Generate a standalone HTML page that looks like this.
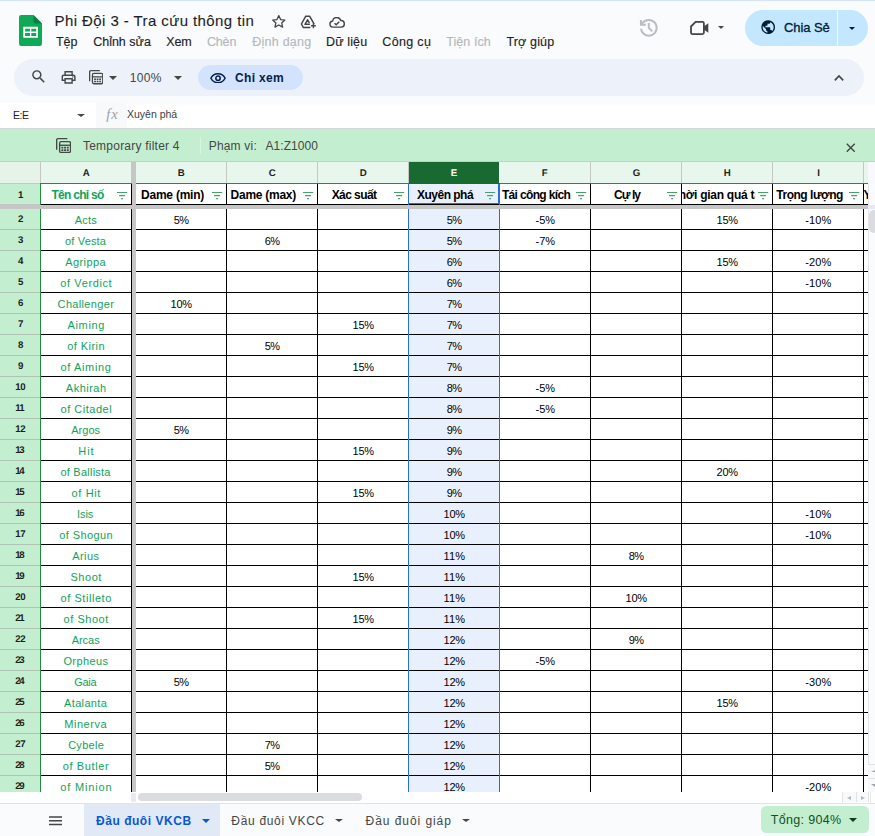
<!DOCTYPE html>
<html lang="vi"><head><meta charset="utf-8"><title>Phi Đội 3 - Tra cứu thông tin</title>
<style>
*{box-sizing:border-box;margin:0;padding:0}
html,body{width:875px;height:836px;overflow:hidden;background:#f9fbfd;font-family:"Liberation Sans",sans-serif;color:#1f1f1f}
.abs{position:absolute}
#app{position:relative;width:875px;height:836px;overflow:hidden}
</style></head><body><div id="app">

<div class="abs" style="left:0px;top:0px;width:875px;height:1px;background:#d7e3fc;"></div>
<svg class="abs" style="left:19px;top:15px" width="23" height="31" viewBox="0 0 23 31">
<path d="M2.2 0H14.5L23 8.5V28.8A2.2 2.2 0 0 1 20.8 31H2.2A2.2 2.2 0 0 1 0 28.800V2.2A2.2 2.2 0 0 1 2.2 0Z" fill="#0fa958"/>
<path d="M14.5 0L23 8.500H16.7A2.2 2.2 0 0 1 14.5 6.300Z" fill="#0b8043"/>
<path d="M4.300 11.800H18.900V22.700H4.300Z M6.100 13.700V16.500H11V13.700Z M12.300 13.700V16.500H17.200V13.700Z M6.100 18V20.900H11V18Z M12.300 18V20.900H17.200V18Z" fill="#fff" fill-rule="evenodd"/>
</svg>
<span style='position:absolute;left:54.60px;top:12px;font-size:15px;line-height:17px;letter-spacing:0.416px;color:#1f1f1f;white-space:nowrap;font-family:"Liberation Sans",sans-serif;-webkit-text-stroke:0.1px #1f1f1f;'>Phi Đội 3 - Tra cứu thông tin</span>
<svg class="abs" style="left:271.400px;top:14.300px" width="15.600" height="14.600" viewBox="0 0 24 22.500"><path d="M12 2.500l2.800 6.100 6.600.700-4.900 4.500 1.400 6.500L12 17l-5.900 3.300 1.400-6.500L2.600 9.300l6.600-.700z" fill="none" stroke="#444746" stroke-width="2" stroke-linejoin="round"/></svg>
<svg class="abs" style="left:299px;top:14px" width="18" height="16" viewBox="0 0 18 16"><path d="M6.800 2.200h3.800l4.300 7.400M6.800 2.200L2.400 10l2 3.600h6.400M8.600 5.800l-2.600 4.500h4.400M8.600 5.800l1.500 2.600" fill="none" stroke="#444746" stroke-width="1.500" stroke-linejoin="round" stroke-linecap="round"/><path d="M14.400 9.400v4.800M12 11.800h4.800" stroke="#444746" stroke-width="1.400" fill="none"/></svg>
<svg class="abs" style="left:329px;top:17px" width="16" height="11" viewBox="0 0 24 16.500"><path d="M6 15.200a4.600 4.600 0 0 1-.600-9.160A6.300 6.300 0 0 1 17.700 5.300 4.950 4.950 0 0 1 18.300 15.200z" fill="none" stroke="#444746" stroke-width="2.100" stroke-linejoin="round"/><path d="M8.300 9.300l2.500 2.500 4.600-4.600" fill="none" stroke="#444746" stroke-width="2.100"/></svg>
<span style='position:absolute;left:55.90px;top:35px;font-size:12.5px;line-height:14px;letter-spacing:-0.044px;color:#1f1f1f;white-space:nowrap;font-family:"Liberation Sans",sans-serif;-webkit-text-stroke:0.15px;'>Tệp</span>
<span style='position:absolute;left:93.20px;top:35px;font-size:12.5px;line-height:14px;letter-spacing:-0.006px;color:#1f1f1f;white-space:nowrap;font-family:"Liberation Sans",sans-serif;-webkit-text-stroke:0.15px;'>Chỉnh sửa</span>
<span style='position:absolute;left:166.30px;top:35px;font-size:12.5px;line-height:14px;letter-spacing:-0.145px;color:#1f1f1f;white-space:nowrap;font-family:"Liberation Sans",sans-serif;-webkit-text-stroke:0.15px;'>Xem</span>
<span style='position:absolute;left:206.90px;top:35px;font-size:12.5px;line-height:14px;letter-spacing:-0.144px;color:#b5b8bc;white-space:nowrap;font-family:"Liberation Sans",sans-serif;-webkit-text-stroke:0.15px;'>Chèn</span>
<span style='position:absolute;left:252.20px;top:35px;font-size:12.5px;line-height:14px;letter-spacing:0.258px;color:#b5b8bc;white-space:nowrap;font-family:"Liberation Sans",sans-serif;-webkit-text-stroke:0.15px;'>Định dạng</span>
<span style='position:absolute;left:326.10px;top:35px;font-size:12.5px;line-height:14px;letter-spacing:0.121px;color:#1f1f1f;white-space:nowrap;font-family:"Liberation Sans",sans-serif;-webkit-text-stroke:0.15px;'>Dữ liệu</span>
<span style='position:absolute;left:382.30px;top:35px;font-size:12.5px;line-height:14px;letter-spacing:0.332px;color:#1f1f1f;white-space:nowrap;font-family:"Liberation Sans",sans-serif;-webkit-text-stroke:0.15px;'>Công cụ</span>
<span style='position:absolute;left:446.20px;top:35px;font-size:12.5px;line-height:14px;letter-spacing:0.079px;color:#b5b8bc;white-space:nowrap;font-family:"Liberation Sans",sans-serif;-webkit-text-stroke:0.15px;'>Tiện ích</span>
<span style='position:absolute;left:506.40px;top:35px;font-size:12.5px;line-height:14px;letter-spacing:0.159px;color:#1f1f1f;white-space:nowrap;font-family:"Liberation Sans",sans-serif;-webkit-text-stroke:0.15px;'>Trợ giúp</span>
<svg class="abs" style="left:636.750px;top:15.550px" width="23.600" height="23.600" viewBox="0 0 24 24"><path d="M12 21q-3.450 0-6.012-2.287T3.050 13H5.100q.350 2.600 2.313 4.300T12 19q2.925 0 4.963-2.037T19 12q0-2.925-2.037-4.963T12 5q-1.725 0-3.225.800T6.250 8H9v2H3V4h2v2.350q1.275-1.600 3.113-2.475T12 3q1.875 0 3.513.713t2.850 1.924q1.212 1.213 1.925 2.850T21 12q0 1.875-.712 3.513t-1.925 2.850q-1.213 1.212-2.850 1.925T12 21Zm2.800-4.800L11 12.400V7h2v4.600l3.200 3.200-1.400 1.400Z" fill="#babcbf"/></svg>
<svg class="abs" style="left:689px;top:20px" width="21" height="16" viewBox="0 0 21 16"><path d="M6.600 1.900H13.400a1.500 1.500 0 0 1 1.500 1.500V12.600a1.500 1.500 0 0 1-1.500 1.500H3.500A1.500 1.500 0 0 1 2 12.600V6.500Z" fill="none" stroke="#444746" stroke-width="1.800" stroke-linejoin="round"/><path d="M15 6.200l4.300-3v9.600l-4.300-3z" fill="#444746"/></svg>
<div class="abs" style="left:717.50px;top:25.60px;width:0;height:0;border-left:3.40px solid transparent;border-right:3.40px solid transparent;border-top:3.60px solid #444746"></div>
<div class="abs" style="left:745px;top:10px;width:123px;height:36px;background:#c2e7ff;border-radius:18px;"></div>
<div class="abs" style="left:837px;top:10px;width:1px;height:36px;background:#f1f9ff;"></div>
<svg class="abs" style="left:760.200px;top:19.400px" width="16.400" height="16.400" viewBox="0 0 24 24"><path d="M12 2C6.480 2 2 6.480 2 12s4.480 10 10 10 10-4.480 10-10S17.520 2 12 2zm-1 17.930c-3.950-.490-7-3.850-7-7.930 0-.620.080-1.210.210-1.790L9 15v1c0 1.100.900 2 2 2v1.930zm6.900-2.540c-.260-.810-1-1.390-1.900-1.390h-1v-3c0-.550-.450-1-1-1H8v-2h2c.550 0 1-.450 1-1V7h2c1.100 0 2-.900 2-2v-.410c2.930 1.190 5 4.060 5 7.410 0 2.080-.800 3.970-2.100 5.390z" fill="#001d35"/></svg>
<span style='position:absolute;left:784.00px;top:20px;font-size:13px;line-height:15px;letter-spacing:-0.087px;color:#001d35;white-space:nowrap;font-family:"Liberation Sans",sans-serif;-webkit-text-stroke:0.3px #001d35;'>Chia Sẻ</span>
<div class="abs" style="left:849.30px;top:26.90px;width:0;height:0;border-left:3.60px solid transparent;border-right:3.60px solid transparent;border-top:3.50px solid #001d35"></div>
<div class="abs" style="left:14px;top:59px;width:850px;height:37px;background:#edf2fa;border-radius:18.500px;"></div>
<svg class="abs" style="left:30.100px;top:68.400px" width="17.300" height="17.300" viewBox="0 0 24 24"><path d="M15.500 14h-.790l-.280-.270A6.471 6.471 0 0 0 16 9.500 6.500 6.500 0 1 0 9.500 16c1.610 0 3.090-.590 4.230-1.570l.270.280v.790l5 4.990L20.490 19l-4.990-5zm-6 0C7.010 14 5 11.990 5 9.500S7.010 5 9.500 5 14 7.010 14 9.500 11.990 14 9.500 14z" fill="#444746"/></svg>
<svg class="abs" style="left:60.400px;top:69px" width="17.200" height="16.800" viewBox="0 0 24 24"><path d="M19 8h-1V3H6v5H5c-1.660 0-3 1.340-3 3v6h4v4h12v-4h4v-6c0-1.660-1.340-3-3-3zM8 5h8v3H8V5zm8 14H8v-4h8v4zm4-4h-2v-2H6v2H4v-4c0-.550.450-1 1-1h14c.550 0 1 .450 1 1v4z" fill="#444746"/><circle cx="18" cy="11.500" r="1" fill="#444746"/></svg>
<svg class="abs" style="left:88.9px;top:70.2px" width="14.4" height="14.4" viewBox="0 0 18 18"><path d="M0.800 14V2.300A1.500 1.500 0 0 1 2.300 .800H13.500" fill="none" stroke="#444746" stroke-width="1.600"/><rect x="4.300" y="4.300" width="12.900" height="12.900" rx="1.800" fill="none" stroke="#444746" stroke-width="1.600"/><path d="M4.300 8.600h12.900" stroke="#444746" stroke-width="1.600"/><path d="M6.400 10.500h2.300v2H6.400zM9.600 10.500h2.300v2H9.600zM12.800 10.500h2.300v2h-2.300zM6.400 13.400h2.300v2H6.400zM9.600 13.400h2.300v2H9.600zM12.800 13.400h2.300v2h-2.300z" fill="#444746"/></svg>
<div class="abs" style="left:108.60px;top:76.00px;width:0;height:0;border-left:4.30px solid transparent;border-right:4.30px solid transparent;border-top:4.20px solid #444746"></div>
<span style='position:absolute;left:129.80px;top:71px;font-size:12px;line-height:14px;letter-spacing:0.293px;color:#444746;white-space:nowrap;font-family:"Liberation Sans",sans-serif;'>100%</span>
<div class="abs" style="left:173.60px;top:76.40px;width:0;height:0;border-left:4.30px solid transparent;border-right:4.30px solid transparent;border-top:4.00px solid #444746"></div>
<div class="abs" style="left:198px;top:65px;width:105px;height:25px;background:#d3e3fd;border-radius:12.500px;"></div>
<svg class="abs" style="left:210px;top:72.500px" width="16" height="10.500" viewBox="0 0 22 14.500"><path d="M1.200 7.250C3.100 3.300 6.700 1.100 11 1.100s7.900 2.200 9.800 6.150C18.900 11.200 15.300 13.400 11 13.400S3.100 11.200 1.200 7.250z" fill="none" stroke="#041e49" stroke-width="2.100"/><circle cx="11" cy="7.250" r="3" fill="none" stroke="#041e49" stroke-width="2.100"/></svg>
<span style='position:absolute;left:235.10px;top:71px;font-size:12px;line-height:14px;letter-spacing:0.298px;color:#041e49;white-space:nowrap;font-family:"Liberation Sans",sans-serif;font-weight:bold;'>Chỉ xem</span>
<svg class="abs" style="left:834px;top:74px" width="10" height="7.500" viewBox="0 0 10 7.500"><path d="M.800 6.300L5 2l4.200 4.300" fill="none" stroke="#444746" stroke-width="1.700"/></svg>
<div class="abs" style="left:0px;top:103px;width:875px;height:25px;background:#fff;"></div>
<div class="abs" style="left:96px;top:103px;width:31px;height:25px;background:#f8f9fa;"></div>
<div class="abs" style="left:127px;top:103px;width:748px;height:1px;background:#fafbfd;"></div>
<div class="abs" style="left:127px;top:104px;width:748px;height:1px;background:#fdfdfe;"></div>
<div class="abs" style="left:0px;top:128px;width:875px;height:1px;background:#d5d8db;"></div>
<span style='position:absolute;left:13.10px;top:109px;font-size:10.5px;line-height:12px;letter-spacing:-0.560px;color:#1f1f1f;white-space:nowrap;font-family:"Liberation Sans",sans-serif;'>E:E</span>
<div class="abs" style="left:76.70px;top:114.30px;width:0;height:0;border-left:4.10px solid transparent;border-right:4.10px solid transparent;border-top:3.60px solid #444746"></div>
<span style='position:absolute;left:106.30px;top:106px;font-size:14.5px;line-height:16px;letter-spacing:0.971px;color:#9ea1a5;white-space:nowrap;font-family:"Liberation Serif",serif;font-style:italic;'>fx</span>
<span style='position:absolute;left:127.00px;top:108px;font-size:10.5px;line-height:12px;letter-spacing:-0.009px;color:#3c4043;white-space:nowrap;font-family:"Liberation Sans",sans-serif;'>Xuyên phá</span>
<div class="abs" style="left:0px;top:129px;width:875px;height:32px;background:#c4eed0;"></div>
<div class="abs" style="left:0px;top:161px;width:875px;height:1px;background:#c9cdc9;"></div>
<svg class="abs" style="left:56px;top:138px" width="15.2" height="15.2" viewBox="0 0 18 18"><path d="M0.800 14V2.300A1.500 1.500 0 0 1 2.300 .800H13.500" fill="none" stroke="#444746" stroke-width="1.600"/><rect x="4.300" y="4.300" width="12.900" height="12.900" rx="1.800" fill="none" stroke="#444746" stroke-width="1.600"/><path d="M4.300 8.600h12.900" stroke="#444746" stroke-width="1.600"/><path d="M6.400 10.500h2.300v2H6.400zM9.600 10.500h2.300v2H9.600zM12.800 10.500h2.300v2h-2.300zM6.400 13.400h2.300v2H6.400zM9.600 13.400h2.300v2H9.600zM12.800 13.400h2.300v2h-2.300z" fill="#444746"/></svg>
<span style='position:absolute;left:83.00px;top:139px;font-size:12px;line-height:14px;letter-spacing:0.222px;color:#444746;white-space:nowrap;font-family:"Liberation Sans",sans-serif;'>Temporary filter 4</span>
<div class="abs" style="left:200px;top:137px;width:1px;height:17px;background:#d9f4e1;"></div>
<span style='position:absolute;left:208.70px;top:139px;font-size:12px;line-height:14px;letter-spacing:0.193px;color:#444746;white-space:nowrap;font-family:"Liberation Sans",sans-serif;'>Phạm vi:</span>
<span style='position:absolute;left:265.50px;top:139px;font-size:12px;line-height:14px;letter-spacing:0.062px;color:#444746;white-space:nowrap;font-family:"Liberation Sans",sans-serif;'>A1:Z1000</span>
<svg class="abs" style="left:846px;top:142.500px" width="9.500" height="9.500" viewBox="0 0 10 10"><path d="M.800 .800l8.400 8.400M9.200 .800L.800 9.200" stroke="#444746" stroke-width="1.500" fill="none"/></svg>
<div class="abs" style="left:0px;top:162px;width:868px;height:630px;background:#fff;"></div>
<div class="abs" style="left:0px;top:162px;width:40px;height:21px;background:#e6f3e9;"></div>
<div class="abs" style="left:40px;top:162px;width:1px;height:21px;background:#c4c8c5;"></div>
<div class="abs" style="left:41px;top:162px;width:90px;height:21px;background:#e8f7ed;"></div>
<div class="abs" style="left:131px;top:162px;width:1px;height:21px;background:#c4c8c5;"></div>
<span style='position:absolute;left:82.80px;top:168px;font-size:9.7px;line-height:11px;letter-spacing:0.000px;color:#1f1f1f;white-space:nowrap;font-family:"Liberation Sans",sans-serif;font-weight:bold;text-rendering:geometricPrecision;'>A</span>
<div class="abs" style="left:136px;top:162px;width:90px;height:21px;background:#e8f7ed;"></div>
<div class="abs" style="left:226px;top:162px;width:1px;height:21px;background:#c4c8c5;"></div>
<span style='position:absolute;left:177.80px;top:168px;font-size:9.7px;line-height:11px;letter-spacing:0.000px;color:#1f1f1f;white-space:nowrap;font-family:"Liberation Sans",sans-serif;font-weight:bold;text-rendering:geometricPrecision;'>B</span>
<div class="abs" style="left:227px;top:162px;width:90px;height:21px;background:#e8f7ed;"></div>
<div class="abs" style="left:317px;top:162px;width:1px;height:21px;background:#c4c8c5;"></div>
<span style='position:absolute;left:268.80px;top:168px;font-size:9.7px;line-height:11px;letter-spacing:0.000px;color:#1f1f1f;white-space:nowrap;font-family:"Liberation Sans",sans-serif;font-weight:bold;text-rendering:geometricPrecision;'>C</span>
<div class="abs" style="left:318px;top:162px;width:90px;height:21px;background:#e8f7ed;"></div>
<div class="abs" style="left:408px;top:162px;width:1px;height:21px;background:#c4c8c5;"></div>
<span style='position:absolute;left:359.80px;top:168px;font-size:9.7px;line-height:11px;letter-spacing:0.000px;color:#1f1f1f;white-space:nowrap;font-family:"Liberation Sans",sans-serif;font-weight:bold;text-rendering:geometricPrecision;'>D</span>
<div class="abs" style="left:409px;top:162px;width:90px;height:22px;background:#186a31;"></div>
<span style='position:absolute;left:450.80px;top:168px;font-size:9.7px;line-height:11px;letter-spacing:0.000px;color:#fff;white-space:nowrap;font-family:"Liberation Sans",sans-serif;font-weight:bold;text-rendering:geometricPrecision;'>E</span>
<div class="abs" style="left:500px;top:162px;width:90px;height:21px;background:#e8f7ed;"></div>
<div class="abs" style="left:590px;top:162px;width:1px;height:21px;background:#c4c8c5;"></div>
<span style='position:absolute;left:541.80px;top:168px;font-size:9.7px;line-height:11px;letter-spacing:0.000px;color:#1f1f1f;white-space:nowrap;font-family:"Liberation Sans",sans-serif;font-weight:bold;text-rendering:geometricPrecision;'>F</span>
<div class="abs" style="left:591px;top:162px;width:90px;height:21px;background:#e8f7ed;"></div>
<div class="abs" style="left:681px;top:162px;width:1px;height:21px;background:#c4c8c5;"></div>
<span style='position:absolute;left:632.80px;top:168px;font-size:9.7px;line-height:11px;letter-spacing:0.000px;color:#1f1f1f;white-space:nowrap;font-family:"Liberation Sans",sans-serif;font-weight:bold;text-rendering:geometricPrecision;'>G</span>
<div class="abs" style="left:682px;top:162px;width:90px;height:21px;background:#e8f7ed;"></div>
<div class="abs" style="left:772px;top:162px;width:1px;height:21px;background:#c4c8c5;"></div>
<span style='position:absolute;left:723.80px;top:168px;font-size:9.7px;line-height:11px;letter-spacing:0.000px;color:#1f1f1f;white-space:nowrap;font-family:"Liberation Sans",sans-serif;font-weight:bold;text-rendering:geometricPrecision;'>H</span>
<div class="abs" style="left:773px;top:162px;width:90px;height:21px;background:#e8f7ed;"></div>
<div class="abs" style="left:863px;top:162px;width:1px;height:21px;background:#c4c8c5;"></div>
<span style='position:absolute;left:817.30px;top:168px;font-size:9.7px;line-height:11px;letter-spacing:0.000px;color:#1f1f1f;white-space:nowrap;font-family:"Liberation Sans",sans-serif;font-weight:bold;text-rendering:geometricPrecision;'>I</span>
<div class="abs" style="left:864px;top:162px;width:4px;height:21px;background:#e8f7ed;"></div>
<div class="abs" style="left:0px;top:183px;width:40px;height:609px;background:#c4eed0;"></div>
<div class="abs" style="left:0px;top:183px;width:40px;height:1px;background:#c3c8c4;"></div>
<span style='position:absolute;left:17.95px;top:190px;font-size:9.7px;line-height:11px;letter-spacing:0.000px;color:#1f1f1f;white-space:nowrap;font-family:"Liberation Sans",sans-serif;font-weight:bold;text-rendering:geometricPrecision;'>1</span>
<div class="abs" style="left:0px;top:229px;width:40px;height:1px;background:#b0c4b6;"></div>
<span style='position:absolute;left:17.95px;top:214px;font-size:9.7px;line-height:11px;letter-spacing:0.000px;color:#1f1f1f;white-space:nowrap;font-family:"Liberation Sans",sans-serif;font-weight:bold;text-rendering:geometricPrecision;'>2</span>
<div class="abs" style="left:0px;top:250px;width:40px;height:1px;background:#b0c4b6;"></div>
<span style='position:absolute;left:17.95px;top:235px;font-size:9.7px;line-height:11px;letter-spacing:0.000px;color:#1f1f1f;white-space:nowrap;font-family:"Liberation Sans",sans-serif;font-weight:bold;text-rendering:geometricPrecision;'>3</span>
<div class="abs" style="left:0px;top:271px;width:40px;height:1px;background:#b0c4b6;"></div>
<span style='position:absolute;left:17.95px;top:256px;font-size:9.7px;line-height:11px;letter-spacing:0.000px;color:#1f1f1f;white-space:nowrap;font-family:"Liberation Sans",sans-serif;font-weight:bold;text-rendering:geometricPrecision;'>4</span>
<div class="abs" style="left:0px;top:292px;width:40px;height:1px;background:#b0c4b6;"></div>
<span style='position:absolute;left:17.95px;top:277px;font-size:9.7px;line-height:11px;letter-spacing:0.000px;color:#1f1f1f;white-space:nowrap;font-family:"Liberation Sans",sans-serif;font-weight:bold;text-rendering:geometricPrecision;'>5</span>
<div class="abs" style="left:0px;top:313px;width:40px;height:1px;background:#b0c4b6;"></div>
<span style='position:absolute;left:17.95px;top:298px;font-size:9.7px;line-height:11px;letter-spacing:0.000px;color:#1f1f1f;white-space:nowrap;font-family:"Liberation Sans",sans-serif;font-weight:bold;text-rendering:geometricPrecision;'>6</span>
<div class="abs" style="left:0px;top:334px;width:40px;height:1px;background:#b0c4b6;"></div>
<span style='position:absolute;left:17.95px;top:319px;font-size:9.7px;line-height:11px;letter-spacing:0.000px;color:#1f1f1f;white-space:nowrap;font-family:"Liberation Sans",sans-serif;font-weight:bold;text-rendering:geometricPrecision;'>7</span>
<div class="abs" style="left:0px;top:355px;width:40px;height:1px;background:#b0c4b6;"></div>
<span style='position:absolute;left:17.95px;top:340px;font-size:9.7px;line-height:11px;letter-spacing:0.000px;color:#1f1f1f;white-space:nowrap;font-family:"Liberation Sans",sans-serif;font-weight:bold;text-rendering:geometricPrecision;'>8</span>
<div class="abs" style="left:0px;top:376px;width:40px;height:1px;background:#b0c4b6;"></div>
<span style='position:absolute;left:17.95px;top:361px;font-size:9.7px;line-height:11px;letter-spacing:0.000px;color:#1f1f1f;white-space:nowrap;font-family:"Liberation Sans",sans-serif;font-weight:bold;text-rendering:geometricPrecision;'>9</span>
<div class="abs" style="left:0px;top:397px;width:40px;height:1px;background:#b0c4b6;"></div>
<span style='position:absolute;left:15.30px;top:382px;font-size:9.7px;line-height:11px;letter-spacing:-0.388px;color:#1f1f1f;white-space:nowrap;font-family:"Liberation Sans",sans-serif;font-weight:bold;text-rendering:geometricPrecision;'>10</span>
<div class="abs" style="left:0px;top:418px;width:40px;height:1px;background:#b0c4b6;"></div>
<span style='position:absolute;left:15.30px;top:403px;font-size:9.7px;line-height:11px;letter-spacing:-0.853px;color:#1f1f1f;white-space:nowrap;font-family:"Liberation Sans",sans-serif;font-weight:bold;text-rendering:geometricPrecision;'>11</span>
<div class="abs" style="left:0px;top:439px;width:40px;height:1px;background:#b0c4b6;"></div>
<span style='position:absolute;left:15.30px;top:424px;font-size:9.7px;line-height:11px;letter-spacing:-0.388px;color:#1f1f1f;white-space:nowrap;font-family:"Liberation Sans",sans-serif;font-weight:bold;text-rendering:geometricPrecision;'>12</span>
<div class="abs" style="left:0px;top:460px;width:40px;height:1px;background:#b0c4b6;"></div>
<span style='position:absolute;left:15.30px;top:445px;font-size:9.7px;line-height:11px;letter-spacing:-1.388px;color:#1f1f1f;white-space:nowrap;font-family:"Liberation Sans",sans-serif;font-weight:bold;text-rendering:geometricPrecision;'>13</span>
<div class="abs" style="left:0px;top:481px;width:40px;height:1px;background:#b0c4b6;"></div>
<span style='position:absolute;left:15.30px;top:466px;font-size:9.7px;line-height:11px;letter-spacing:-1.388px;color:#1f1f1f;white-space:nowrap;font-family:"Liberation Sans",sans-serif;font-weight:bold;text-rendering:geometricPrecision;'>14</span>
<div class="abs" style="left:0px;top:502px;width:40px;height:1px;background:#b0c4b6;"></div>
<span style='position:absolute;left:15.30px;top:487px;font-size:9.7px;line-height:11px;letter-spacing:-1.388px;color:#1f1f1f;white-space:nowrap;font-family:"Liberation Sans",sans-serif;font-weight:bold;text-rendering:geometricPrecision;'>15</span>
<div class="abs" style="left:0px;top:523px;width:40px;height:1px;background:#b0c4b6;"></div>
<span style='position:absolute;left:15.30px;top:508px;font-size:9.7px;line-height:11px;letter-spacing:-1.388px;color:#1f1f1f;white-space:nowrap;font-family:"Liberation Sans",sans-serif;font-weight:bold;text-rendering:geometricPrecision;'>16</span>
<div class="abs" style="left:0px;top:544px;width:40px;height:1px;background:#b0c4b6;"></div>
<span style='position:absolute;left:15.30px;top:529px;font-size:9.7px;line-height:11px;letter-spacing:-0.388px;color:#1f1f1f;white-space:nowrap;font-family:"Liberation Sans",sans-serif;font-weight:bold;text-rendering:geometricPrecision;'>17</span>
<div class="abs" style="left:0px;top:565px;width:40px;height:1px;background:#b0c4b6;"></div>
<span style='position:absolute;left:15.30px;top:550px;font-size:9.7px;line-height:11px;letter-spacing:-1.388px;color:#1f1f1f;white-space:nowrap;font-family:"Liberation Sans",sans-serif;font-weight:bold;text-rendering:geometricPrecision;'>18</span>
<div class="abs" style="left:0px;top:586px;width:40px;height:1px;background:#b0c4b6;"></div>
<span style='position:absolute;left:15.30px;top:571px;font-size:9.7px;line-height:11px;letter-spacing:-1.388px;color:#1f1f1f;white-space:nowrap;font-family:"Liberation Sans",sans-serif;font-weight:bold;text-rendering:geometricPrecision;'>19</span>
<div class="abs" style="left:0px;top:607px;width:40px;height:1px;background:#b0c4b6;"></div>
<span style='position:absolute;left:15.30px;top:592px;font-size:9.7px;line-height:11px;letter-spacing:-0.388px;color:#1f1f1f;white-space:nowrap;font-family:"Liberation Sans",sans-serif;font-weight:bold;text-rendering:geometricPrecision;'>20</span>
<div class="abs" style="left:0px;top:628px;width:40px;height:1px;background:#b0c4b6;"></div>
<span style='position:absolute;left:15.30px;top:613px;font-size:9.7px;line-height:11px;letter-spacing:-1.388px;color:#1f1f1f;white-space:nowrap;font-family:"Liberation Sans",sans-serif;font-weight:bold;text-rendering:geometricPrecision;'>21</span>
<div class="abs" style="left:0px;top:649px;width:40px;height:1px;background:#b0c4b6;"></div>
<span style='position:absolute;left:15.30px;top:634px;font-size:9.7px;line-height:11px;letter-spacing:-0.388px;color:#1f1f1f;white-space:nowrap;font-family:"Liberation Sans",sans-serif;font-weight:bold;text-rendering:geometricPrecision;'>22</span>
<div class="abs" style="left:0px;top:670px;width:40px;height:1px;background:#b0c4b6;"></div>
<span style='position:absolute;left:15.30px;top:655px;font-size:9.7px;line-height:11px;letter-spacing:-1.388px;color:#1f1f1f;white-space:nowrap;font-family:"Liberation Sans",sans-serif;font-weight:bold;text-rendering:geometricPrecision;'>23</span>
<div class="abs" style="left:0px;top:691px;width:40px;height:1px;background:#b0c4b6;"></div>
<span style='position:absolute;left:15.30px;top:676px;font-size:9.7px;line-height:11px;letter-spacing:-1.388px;color:#1f1f1f;white-space:nowrap;font-family:"Liberation Sans",sans-serif;font-weight:bold;text-rendering:geometricPrecision;'>24</span>
<div class="abs" style="left:0px;top:712px;width:40px;height:1px;background:#b0c4b6;"></div>
<span style='position:absolute;left:15.30px;top:697px;font-size:9.7px;line-height:11px;letter-spacing:-1.388px;color:#1f1f1f;white-space:nowrap;font-family:"Liberation Sans",sans-serif;font-weight:bold;text-rendering:geometricPrecision;'>25</span>
<div class="abs" style="left:0px;top:733px;width:40px;height:1px;background:#b0c4b6;"></div>
<span style='position:absolute;left:15.30px;top:718px;font-size:9.7px;line-height:11px;letter-spacing:-1.388px;color:#1f1f1f;white-space:nowrap;font-family:"Liberation Sans",sans-serif;font-weight:bold;text-rendering:geometricPrecision;'>26</span>
<div class="abs" style="left:0px;top:754px;width:40px;height:1px;background:#b0c4b6;"></div>
<span style='position:absolute;left:15.30px;top:739px;font-size:9.7px;line-height:11px;letter-spacing:-0.388px;color:#1f1f1f;white-space:nowrap;font-family:"Liberation Sans",sans-serif;font-weight:bold;text-rendering:geometricPrecision;'>27</span>
<div class="abs" style="left:0px;top:775px;width:40px;height:1px;background:#b0c4b6;"></div>
<span style='position:absolute;left:15.30px;top:760px;font-size:9.7px;line-height:11px;letter-spacing:-1.388px;color:#1f1f1f;white-space:nowrap;font-family:"Liberation Sans",sans-serif;font-weight:bold;text-rendering:geometricPrecision;'>28</span>
<div class="abs" style="left:0px;top:796px;width:40px;height:1px;background:#b0c4b6;"></div>
<span style='position:absolute;left:15.30px;top:781px;font-size:9.7px;line-height:11px;letter-spacing:-1.388px;color:#1f1f1f;white-space:nowrap;font-family:"Liberation Sans",sans-serif;font-weight:bold;text-rendering:geometricPrecision;'>29</span>
<div class="abs" style="left:409px;top:184px;width:90px;height:608px;background:#e8f0fd;"></div>
<span style='position:absolute;left:51.40px;top:188px;font-size:12px;line-height:14px;letter-spacing:-0.713px;color:#10a35a;white-space:nowrap;font-family:"Liberation Sans",sans-serif;font-weight:bold;'>Tên chỉ số</span>
<span style='position:absolute;left:141.00px;top:188px;font-size:12px;line-height:14px;letter-spacing:-0.228px;color:#000;white-space:nowrap;font-family:"Liberation Sans",sans-serif;font-weight:bold;'>Dame (min)</span>
<span style='position:absolute;left:230.60px;top:188px;font-size:12px;line-height:14px;letter-spacing:-0.270px;color:#000;white-space:nowrap;font-family:"Liberation Sans",sans-serif;font-weight:bold;'>Dame (max)</span>
<span style='position:absolute;left:331.70px;top:188px;font-size:12px;line-height:14px;letter-spacing:-0.580px;color:#000;white-space:nowrap;font-family:"Liberation Sans",sans-serif;font-weight:bold;'>Xác suất</span>
<span style='position:absolute;left:417.00px;top:188px;font-size:12px;line-height:14px;letter-spacing:-0.513px;color:#000;white-space:nowrap;font-family:"Liberation Sans",sans-serif;font-weight:bold;'>Xuyên phá</span>
<span style='position:absolute;left:501.90px;top:188px;font-size:12px;line-height:14px;letter-spacing:-0.646px;color:#000;white-space:nowrap;font-family:"Liberation Sans",sans-serif;font-weight:bold;'>Tái công kích</span>
<span style='position:absolute;left:614.10px;top:188px;font-size:12px;line-height:14px;letter-spacing:-0.956px;color:#000;white-space:nowrap;font-family:"Liberation Sans",sans-serif;font-weight:bold;'>Cự ly</span>
<span style='position:absolute;left:776.30px;top:188px;font-size:12px;line-height:14px;letter-spacing:-0.485px;color:#000;white-space:nowrap;font-family:"Liberation Sans",sans-serif;font-weight:bold;'>Trọng lượng</span>
<div class="abs" style="left:682px;top:184px;width:73px;height:20px;overflow:hidden">
<span style="position:absolute;left:-10.45px;top:4px;font-size:12px;line-height:14px;font-weight:bold;color:#000;white-space:nowrap;letter-spacing:-0.256px">Thời gian quá tải</span>
</div>
<div class="abs" style="left:864px;top:184px;width:4px;height:20px;overflow:hidden"><span style="position:absolute;left:-0.500px;top:4px;font-size:12px;line-height:14px;font-weight:bold;color:#000">Y</span></div>
<svg class="abs" style="left:117px;top:191px;width:11px;height:9px" viewBox="0 0 11 9"><path d="M0 1.500h10.200M2.100 4.600h6M4.100 7.600h2" stroke="#46a268" stroke-width="1.100" fill="none"/></svg>
<svg class="abs" style="left:212.3px;top:191px;width:11px;height:9px" viewBox="0 0 11 9"><path d="M0 1.500h10.200M2.100 4.600h6M4.100 7.600h2" stroke="#46a268" stroke-width="1.100" fill="none"/></svg>
<svg class="abs" style="left:302.8px;top:191px;width:11px;height:9px" viewBox="0 0 11 9"><path d="M0 1.500h10.200M2.100 4.600h6M4.100 7.600h2" stroke="#46a268" stroke-width="1.100" fill="none"/></svg>
<svg class="abs" style="left:393.9px;top:191px;width:11px;height:9px" viewBox="0 0 11 9"><path d="M0 1.500h10.200M2.100 4.600h6M4.100 7.600h2" stroke="#46a268" stroke-width="1.100" fill="none"/></svg>
<svg class="abs" style="left:484.9px;top:191px;width:11px;height:9px" viewBox="0 0 11 9"><path d="M0 1.500h10.200M2.100 4.600h6M4.100 7.600h2" stroke="#46a268" stroke-width="1.100" fill="none"/></svg>
<svg class="abs" style="left:575.8px;top:191px;width:11px;height:9px" viewBox="0 0 11 9"><path d="M0 1.500h10.200M2.100 4.600h6M4.100 7.600h2" stroke="#46a268" stroke-width="1.100" fill="none"/></svg>
<svg class="abs" style="left:666.8px;top:191px;width:11px;height:9px" viewBox="0 0 11 9"><path d="M0 1.500h10.200M2.100 4.600h6M4.100 7.600h2" stroke="#46a268" stroke-width="1.100" fill="none"/></svg>
<svg class="abs" style="left:757.8px;top:191px;width:11px;height:9px" viewBox="0 0 11 9"><path d="M0 1.500h10.200M2.100 4.600h6M4.100 7.600h2" stroke="#46a268" stroke-width="1.100" fill="none"/></svg>
<svg class="abs" style="left:848.8px;top:191px;width:11px;height:9px" viewBox="0 0 11 9"><path d="M0 1.500h10.200M2.100 4.600h6M4.100 7.600h2" stroke="#46a268" stroke-width="1.100" fill="none"/></svg>
<span style='position:absolute;left:74.65px;top:214px;font-size:11px;line-height:12px;letter-spacing:0.202px;color:#10a35a;white-space:nowrap;font-family:"Liberation Sans",sans-serif;'>Acts</span>
<span style='position:absolute;left:173.65px;top:214px;font-size:11px;line-height:12px;letter-spacing:-0.618px;color:#000;white-space:nowrap;font-family:"Liberation Sans",sans-serif;'>5%</span>
<span style='position:absolute;left:446.65px;top:214px;font-size:11px;line-height:12px;letter-spacing:-0.618px;color:#000;white-space:nowrap;font-family:"Liberation Sans",sans-serif;'>5%</span>
<span style='position:absolute;left:535.45px;top:214px;font-size:11px;line-height:12px;letter-spacing:0.060px;color:#000;white-space:nowrap;font-family:"Liberation Sans",sans-serif;'>-5%</span>
<span style='position:absolute;left:716.50px;top:214px;font-size:11px;line-height:12px;letter-spacing:-0.218px;color:#000;white-space:nowrap;font-family:"Liberation Sans",sans-serif;'>15%</span>
<span style='position:absolute;left:805.30px;top:214px;font-size:11px;line-height:12px;letter-spacing:0.101px;color:#000;white-space:nowrap;font-family:"Liberation Sans",sans-serif;'>-10%</span>
<span style='position:absolute;left:65.00px;top:235px;font-size:11px;line-height:12px;letter-spacing:0.167px;color:#10a35a;white-space:nowrap;font-family:"Liberation Sans",sans-serif;'>of Vesta</span>
<span style='position:absolute;left:264.65px;top:235px;font-size:11px;line-height:12px;letter-spacing:-0.618px;color:#000;white-space:nowrap;font-family:"Liberation Sans",sans-serif;'>6%</span>
<span style='position:absolute;left:446.65px;top:235px;font-size:11px;line-height:12px;letter-spacing:-0.618px;color:#000;white-space:nowrap;font-family:"Liberation Sans",sans-serif;'>5%</span>
<span style='position:absolute;left:535.45px;top:235px;font-size:11px;line-height:12px;letter-spacing:0.060px;color:#000;white-space:nowrap;font-family:"Liberation Sans",sans-serif;'>-7%</span>
<span style='position:absolute;left:65.35px;top:256px;font-size:11px;line-height:12px;letter-spacing:0.384px;color:#10a35a;white-space:nowrap;font-family:"Liberation Sans",sans-serif;'>Agrippa</span>
<span style='position:absolute;left:446.65px;top:256px;font-size:11px;line-height:12px;letter-spacing:-0.618px;color:#000;white-space:nowrap;font-family:"Liberation Sans",sans-serif;'>6%</span>
<span style='position:absolute;left:716.50px;top:256px;font-size:11px;line-height:12px;letter-spacing:-0.218px;color:#000;white-space:nowrap;font-family:"Liberation Sans",sans-serif;'>15%</span>
<span style='position:absolute;left:805.30px;top:256px;font-size:11px;line-height:12px;letter-spacing:0.101px;color:#000;white-space:nowrap;font-family:"Liberation Sans",sans-serif;'>-20%</span>
<span style='position:absolute;left:60.25px;top:277px;font-size:11px;line-height:12px;letter-spacing:0.611px;color:#10a35a;white-space:nowrap;font-family:"Liberation Sans",sans-serif;'>of Verdict</span>
<span style='position:absolute;left:446.65px;top:277px;font-size:11px;line-height:12px;letter-spacing:-0.618px;color:#000;white-space:nowrap;font-family:"Liberation Sans",sans-serif;'>6%</span>
<span style='position:absolute;left:805.30px;top:277px;font-size:11px;line-height:12px;letter-spacing:0.101px;color:#000;white-space:nowrap;font-family:"Liberation Sans",sans-serif;'>-10%</span>
<span style='position:absolute;left:57.60px;top:298px;font-size:11px;line-height:12px;letter-spacing:0.340px;color:#10a35a;white-space:nowrap;font-family:"Liberation Sans",sans-serif;'>Challenger</span>
<span style='position:absolute;left:170.50px;top:298px;font-size:11px;line-height:12px;letter-spacing:-0.218px;color:#000;white-space:nowrap;font-family:"Liberation Sans",sans-serif;'>10%</span>
<span style='position:absolute;left:446.65px;top:298px;font-size:11px;line-height:12px;letter-spacing:-0.618px;color:#000;white-space:nowrap;font-family:"Liberation Sans",sans-serif;'>7%</span>
<span style='position:absolute;left:67.45px;top:319px;font-size:11px;line-height:12px;letter-spacing:0.679px;color:#10a35a;white-space:nowrap;font-family:"Liberation Sans",sans-serif;'>Aiming</span>
<span style='position:absolute;left:352.50px;top:319px;font-size:11px;line-height:12px;letter-spacing:-0.218px;color:#000;white-space:nowrap;font-family:"Liberation Sans",sans-serif;'>15%</span>
<span style='position:absolute;left:446.65px;top:319px;font-size:11px;line-height:12px;letter-spacing:-0.618px;color:#000;white-space:nowrap;font-family:"Liberation Sans",sans-serif;'>7%</span>
<span style='position:absolute;left:67.30px;top:340px;font-size:11px;line-height:12px;letter-spacing:0.440px;color:#10a35a;white-space:nowrap;font-family:"Liberation Sans",sans-serif;'>of Kirin</span>
<span style='position:absolute;left:264.65px;top:340px;font-size:11px;line-height:12px;letter-spacing:-0.618px;color:#000;white-space:nowrap;font-family:"Liberation Sans",sans-serif;'>5%</span>
<span style='position:absolute;left:446.65px;top:340px;font-size:11px;line-height:12px;letter-spacing:-0.618px;color:#000;white-space:nowrap;font-family:"Liberation Sans",sans-serif;'>7%</span>
<span style='position:absolute;left:60.45px;top:361px;font-size:11px;line-height:12px;letter-spacing:0.646px;color:#10a35a;white-space:nowrap;font-family:"Liberation Sans",sans-serif;'>of Aiming</span>
<span style='position:absolute;left:352.50px;top:361px;font-size:11px;line-height:12px;letter-spacing:-0.218px;color:#000;white-space:nowrap;font-family:"Liberation Sans",sans-serif;'>15%</span>
<span style='position:absolute;left:446.65px;top:361px;font-size:11px;line-height:12px;letter-spacing:-0.618px;color:#000;white-space:nowrap;font-family:"Liberation Sans",sans-serif;'>7%</span>
<span style='position:absolute;left:65.85px;top:382px;font-size:11px;line-height:12px;letter-spacing:0.487px;color:#10a35a;white-space:nowrap;font-family:"Liberation Sans",sans-serif;'>Akhirah</span>
<span style='position:absolute;left:446.65px;top:382px;font-size:11px;line-height:12px;letter-spacing:-0.618px;color:#000;white-space:nowrap;font-family:"Liberation Sans",sans-serif;'>8%</span>
<span style='position:absolute;left:535.45px;top:382px;font-size:11px;line-height:12px;letter-spacing:0.060px;color:#000;white-space:nowrap;font-family:"Liberation Sans",sans-serif;'>-5%</span>
<span style='position:absolute;left:60.60px;top:403px;font-size:11px;line-height:12px;letter-spacing:0.508px;color:#10a35a;white-space:nowrap;font-family:"Liberation Sans",sans-serif;'>of Citadel</span>
<span style='position:absolute;left:446.65px;top:403px;font-size:11px;line-height:12px;letter-spacing:-0.618px;color:#000;white-space:nowrap;font-family:"Liberation Sans",sans-serif;'>8%</span>
<span style='position:absolute;left:535.45px;top:403px;font-size:11px;line-height:12px;letter-spacing:0.060px;color:#000;white-space:nowrap;font-family:"Liberation Sans",sans-serif;'>-5%</span>
<span style='position:absolute;left:71.30px;top:424px;font-size:11px;line-height:12px;letter-spacing:-0.009px;color:#10a35a;white-space:nowrap;font-family:"Liberation Sans",sans-serif;'>Argos</span>
<span style='position:absolute;left:173.65px;top:424px;font-size:11px;line-height:12px;letter-spacing:-0.618px;color:#000;white-space:nowrap;font-family:"Liberation Sans",sans-serif;'>5%</span>
<span style='position:absolute;left:446.65px;top:424px;font-size:11px;line-height:12px;letter-spacing:-0.618px;color:#000;white-space:nowrap;font-family:"Liberation Sans",sans-serif;'>9%</span>
<span style='position:absolute;left:78.35px;top:445px;font-size:11px;line-height:12px;letter-spacing:0.856px;color:#10a35a;white-space:nowrap;font-family:"Liberation Sans",sans-serif;'>Hit</span>
<span style='position:absolute;left:352.50px;top:445px;font-size:11px;line-height:12px;letter-spacing:-0.218px;color:#000;white-space:nowrap;font-family:"Liberation Sans",sans-serif;'>15%</span>
<span style='position:absolute;left:446.65px;top:445px;font-size:11px;line-height:12px;letter-spacing:-0.618px;color:#000;white-space:nowrap;font-family:"Liberation Sans",sans-serif;'>9%</span>
<span style='position:absolute;left:60.45px;top:466px;font-size:11px;line-height:12px;letter-spacing:0.233px;color:#10a35a;white-space:nowrap;font-family:"Liberation Sans",sans-serif;'>of Ballista</span>
<span style='position:absolute;left:446.65px;top:466px;font-size:11px;line-height:12px;letter-spacing:-0.618px;color:#000;white-space:nowrap;font-family:"Liberation Sans",sans-serif;'>9%</span>
<span style='position:absolute;left:716.50px;top:466px;font-size:11px;line-height:12px;letter-spacing:-0.218px;color:#000;white-space:nowrap;font-family:"Liberation Sans",sans-serif;'>20%</span>
<span style='position:absolute;left:71.50px;top:487px;font-size:11px;line-height:12px;letter-spacing:0.636px;color:#10a35a;white-space:nowrap;font-family:"Liberation Sans",sans-serif;'>of Hit</span>
<span style='position:absolute;left:352.50px;top:487px;font-size:11px;line-height:12px;letter-spacing:-0.218px;color:#000;white-space:nowrap;font-family:"Liberation Sans",sans-serif;'>15%</span>
<span style='position:absolute;left:446.65px;top:487px;font-size:11px;line-height:12px;letter-spacing:-0.618px;color:#000;white-space:nowrap;font-family:"Liberation Sans",sans-serif;'>9%</span>
<span style='position:absolute;left:77.00px;top:508px;font-size:11px;line-height:12px;letter-spacing:-0.067px;color:#10a35a;white-space:nowrap;font-family:"Liberation Sans",sans-serif;'>Isis</span>
<span style='position:absolute;left:443.50px;top:508px;font-size:11px;line-height:12px;letter-spacing:-0.218px;color:#000;white-space:nowrap;font-family:"Liberation Sans",sans-serif;'>10%</span>
<span style='position:absolute;left:805.30px;top:508px;font-size:11px;line-height:12px;letter-spacing:0.101px;color:#000;white-space:nowrap;font-family:"Liberation Sans",sans-serif;'>-10%</span>
<span style='position:absolute;left:59.35px;top:529px;font-size:11px;line-height:12px;letter-spacing:0.383px;color:#10a35a;white-space:nowrap;font-family:"Liberation Sans",sans-serif;'>of Shogun</span>
<span style='position:absolute;left:443.50px;top:529px;font-size:11px;line-height:12px;letter-spacing:-0.218px;color:#000;white-space:nowrap;font-family:"Liberation Sans",sans-serif;'>10%</span>
<span style='position:absolute;left:805.30px;top:529px;font-size:11px;line-height:12px;letter-spacing:0.101px;color:#000;white-space:nowrap;font-family:"Liberation Sans",sans-serif;'>-10%</span>
<span style='position:absolute;left:72.35px;top:550px;font-size:11px;line-height:12px;letter-spacing:0.385px;color:#10a35a;white-space:nowrap;font-family:"Liberation Sans",sans-serif;'>Arius</span>
<span style='position:absolute;left:443.50px;top:550px;font-size:11px;line-height:12px;letter-spacing:0.191px;color:#000;white-space:nowrap;font-family:"Liberation Sans",sans-serif;'>11%</span>
<span style='position:absolute;left:628.65px;top:550px;font-size:11px;line-height:12px;letter-spacing:-0.618px;color:#000;white-space:nowrap;font-family:"Liberation Sans",sans-serif;'>8%</span>
<span style='position:absolute;left:70.45px;top:571px;font-size:11px;line-height:12px;letter-spacing:0.553px;color:#10a35a;white-space:nowrap;font-family:"Liberation Sans",sans-serif;'>Shoot</span>
<span style='position:absolute;left:352.50px;top:571px;font-size:11px;line-height:12px;letter-spacing:-0.218px;color:#000;white-space:nowrap;font-family:"Liberation Sans",sans-serif;'>15%</span>
<span style='position:absolute;left:443.50px;top:571px;font-size:11px;line-height:12px;letter-spacing:0.191px;color:#000;white-space:nowrap;font-family:"Liberation Sans",sans-serif;'>11%</span>
<span style='position:absolute;left:60.60px;top:592px;font-size:11px;line-height:12px;letter-spacing:0.547px;color:#10a35a;white-space:nowrap;font-family:"Liberation Sans",sans-serif;'>of Stilleto</span>
<span style='position:absolute;left:443.50px;top:592px;font-size:11px;line-height:12px;letter-spacing:0.191px;color:#000;white-space:nowrap;font-family:"Liberation Sans",sans-serif;'>11%</span>
<span style='position:absolute;left:625.50px;top:592px;font-size:11px;line-height:12px;letter-spacing:-0.218px;color:#000;white-space:nowrap;font-family:"Liberation Sans",sans-serif;'>10%</span>
<span style='position:absolute;left:63.60px;top:613px;font-size:11px;line-height:12px;letter-spacing:0.526px;color:#10a35a;white-space:nowrap;font-family:"Liberation Sans",sans-serif;'>of Shoot</span>
<span style='position:absolute;left:352.50px;top:613px;font-size:11px;line-height:12px;letter-spacing:-0.218px;color:#000;white-space:nowrap;font-family:"Liberation Sans",sans-serif;'>15%</span>
<span style='position:absolute;left:443.50px;top:613px;font-size:11px;line-height:12px;letter-spacing:0.191px;color:#000;white-space:nowrap;font-family:"Liberation Sans",sans-serif;'>11%</span>
<span style='position:absolute;left:71.65px;top:634px;font-size:11px;line-height:12px;letter-spacing:-0.029px;color:#10a35a;white-space:nowrap;font-family:"Liberation Sans",sans-serif;'>Arcas</span>
<span style='position:absolute;left:443.50px;top:634px;font-size:11px;line-height:12px;letter-spacing:-0.218px;color:#000;white-space:nowrap;font-family:"Liberation Sans",sans-serif;'>12%</span>
<span style='position:absolute;left:628.65px;top:634px;font-size:11px;line-height:12px;letter-spacing:-0.618px;color:#000;white-space:nowrap;font-family:"Liberation Sans",sans-serif;'>9%</span>
<span style='position:absolute;left:63.40px;top:655px;font-size:11px;line-height:12px;letter-spacing:0.385px;color:#10a35a;white-space:nowrap;font-family:"Liberation Sans",sans-serif;'>Orpheus</span>
<span style='position:absolute;left:443.50px;top:655px;font-size:11px;line-height:12px;letter-spacing:-0.218px;color:#000;white-space:nowrap;font-family:"Liberation Sans",sans-serif;'>12%</span>
<span style='position:absolute;left:535.45px;top:655px;font-size:11px;line-height:12px;letter-spacing:0.060px;color:#000;white-space:nowrap;font-family:"Liberation Sans",sans-serif;'>-5%</span>
<span style='position:absolute;left:74.30px;top:676px;font-size:11px;line-height:12px;letter-spacing:-0.306px;color:#10a35a;white-space:nowrap;font-family:"Liberation Sans",sans-serif;'>Gaia</span>
<span style='position:absolute;left:173.65px;top:676px;font-size:11px;line-height:12px;letter-spacing:-0.618px;color:#000;white-space:nowrap;font-family:"Liberation Sans",sans-serif;'>5%</span>
<span style='position:absolute;left:443.50px;top:676px;font-size:11px;line-height:12px;letter-spacing:-0.218px;color:#000;white-space:nowrap;font-family:"Liberation Sans",sans-serif;'>12%</span>
<span style='position:absolute;left:805.30px;top:676px;font-size:11px;line-height:12px;letter-spacing:0.101px;color:#000;white-space:nowrap;font-family:"Liberation Sans",sans-serif;'>-30%</span>
<span style='position:absolute;left:64.10px;top:697px;font-size:11px;line-height:12px;letter-spacing:0.336px;color:#10a35a;white-space:nowrap;font-family:"Liberation Sans",sans-serif;'>Atalanta</span>
<span style='position:absolute;left:443.50px;top:697px;font-size:11px;line-height:12px;letter-spacing:-0.218px;color:#000;white-space:nowrap;font-family:"Liberation Sans",sans-serif;'>12%</span>
<span style='position:absolute;left:716.50px;top:697px;font-size:11px;line-height:12px;letter-spacing:-0.218px;color:#000;white-space:nowrap;font-family:"Liberation Sans",sans-serif;'>15%</span>
<span style='position:absolute;left:64.30px;top:718px;font-size:11px;line-height:12px;letter-spacing:0.532px;color:#10a35a;white-space:nowrap;font-family:"Liberation Sans",sans-serif;'>Minerva</span>
<span style='position:absolute;left:443.50px;top:718px;font-size:11px;line-height:12px;letter-spacing:-0.218px;color:#000;white-space:nowrap;font-family:"Liberation Sans",sans-serif;'>12%</span>
<span style='position:absolute;left:68.15px;top:739px;font-size:11px;line-height:12px;letter-spacing:0.275px;color:#10a35a;white-space:nowrap;font-family:"Liberation Sans",sans-serif;'>Cybele</span>
<span style='position:absolute;left:264.65px;top:739px;font-size:11px;line-height:12px;letter-spacing:-0.618px;color:#000;white-space:nowrap;font-family:"Liberation Sans",sans-serif;'>7%</span>
<span style='position:absolute;left:443.50px;top:739px;font-size:11px;line-height:12px;letter-spacing:-0.218px;color:#000;white-space:nowrap;font-family:"Liberation Sans",sans-serif;'>12%</span>
<span style='position:absolute;left:62.70px;top:760px;font-size:11px;line-height:12px;letter-spacing:0.637px;color:#10a35a;white-space:nowrap;font-family:"Liberation Sans",sans-serif;'>of Butler</span>
<span style='position:absolute;left:264.65px;top:760px;font-size:11px;line-height:12px;letter-spacing:-0.618px;color:#000;white-space:nowrap;font-family:"Liberation Sans",sans-serif;'>5%</span>
<span style='position:absolute;left:443.50px;top:760px;font-size:11px;line-height:12px;letter-spacing:-0.218px;color:#000;white-space:nowrap;font-family:"Liberation Sans",sans-serif;'>12%</span>
<span style='position:absolute;left:60.25px;top:781px;font-size:11px;line-height:12px;letter-spacing:0.848px;color:#10a35a;white-space:nowrap;font-family:"Liberation Sans",sans-serif;'>of Minion</span>
<span style='position:absolute;left:443.50px;top:781px;font-size:11px;line-height:12px;letter-spacing:-0.218px;color:#000;white-space:nowrap;font-family:"Liberation Sans",sans-serif;'>12%</span>
<span style='position:absolute;left:805.30px;top:781px;font-size:11px;line-height:12px;letter-spacing:0.101px;color:#000;white-space:nowrap;font-family:"Liberation Sans",sans-serif;'>-20%</span>
<div class="abs" style="left:41px;top:229px;width:91px;height:1px;background:#000;"></div>
<div class="abs" style="left:136px;top:229px;width:732px;height:1px;background:#000;"></div>
<div class="abs" style="left:41px;top:250px;width:91px;height:1px;background:#000;"></div>
<div class="abs" style="left:136px;top:250px;width:732px;height:1px;background:#000;"></div>
<div class="abs" style="left:41px;top:271px;width:91px;height:1px;background:#000;"></div>
<div class="abs" style="left:136px;top:271px;width:732px;height:1px;background:#000;"></div>
<div class="abs" style="left:41px;top:292px;width:91px;height:1px;background:#000;"></div>
<div class="abs" style="left:136px;top:292px;width:732px;height:1px;background:#000;"></div>
<div class="abs" style="left:41px;top:313px;width:91px;height:1px;background:#000;"></div>
<div class="abs" style="left:136px;top:313px;width:732px;height:1px;background:#000;"></div>
<div class="abs" style="left:41px;top:334px;width:91px;height:1px;background:#000;"></div>
<div class="abs" style="left:136px;top:334px;width:732px;height:1px;background:#000;"></div>
<div class="abs" style="left:41px;top:355px;width:91px;height:1px;background:#000;"></div>
<div class="abs" style="left:136px;top:355px;width:732px;height:1px;background:#000;"></div>
<div class="abs" style="left:41px;top:376px;width:91px;height:1px;background:#000;"></div>
<div class="abs" style="left:136px;top:376px;width:732px;height:1px;background:#000;"></div>
<div class="abs" style="left:41px;top:397px;width:91px;height:1px;background:#000;"></div>
<div class="abs" style="left:136px;top:397px;width:732px;height:1px;background:#000;"></div>
<div class="abs" style="left:41px;top:418px;width:91px;height:1px;background:#000;"></div>
<div class="abs" style="left:136px;top:418px;width:732px;height:1px;background:#000;"></div>
<div class="abs" style="left:41px;top:439px;width:91px;height:1px;background:#000;"></div>
<div class="abs" style="left:136px;top:439px;width:732px;height:1px;background:#000;"></div>
<div class="abs" style="left:41px;top:460px;width:91px;height:1px;background:#000;"></div>
<div class="abs" style="left:136px;top:460px;width:732px;height:1px;background:#000;"></div>
<div class="abs" style="left:41px;top:481px;width:91px;height:1px;background:#000;"></div>
<div class="abs" style="left:136px;top:481px;width:732px;height:1px;background:#000;"></div>
<div class="abs" style="left:41px;top:502px;width:91px;height:1px;background:#000;"></div>
<div class="abs" style="left:136px;top:502px;width:732px;height:1px;background:#000;"></div>
<div class="abs" style="left:41px;top:523px;width:91px;height:1px;background:#000;"></div>
<div class="abs" style="left:136px;top:523px;width:732px;height:1px;background:#000;"></div>
<div class="abs" style="left:41px;top:544px;width:91px;height:1px;background:#000;"></div>
<div class="abs" style="left:136px;top:544px;width:732px;height:1px;background:#000;"></div>
<div class="abs" style="left:41px;top:565px;width:91px;height:1px;background:#000;"></div>
<div class="abs" style="left:136px;top:565px;width:732px;height:1px;background:#000;"></div>
<div class="abs" style="left:41px;top:586px;width:91px;height:1px;background:#000;"></div>
<div class="abs" style="left:136px;top:586px;width:732px;height:1px;background:#000;"></div>
<div class="abs" style="left:41px;top:607px;width:91px;height:1px;background:#000;"></div>
<div class="abs" style="left:136px;top:607px;width:732px;height:1px;background:#000;"></div>
<div class="abs" style="left:41px;top:628px;width:91px;height:1px;background:#000;"></div>
<div class="abs" style="left:136px;top:628px;width:732px;height:1px;background:#000;"></div>
<div class="abs" style="left:41px;top:649px;width:91px;height:1px;background:#000;"></div>
<div class="abs" style="left:136px;top:649px;width:732px;height:1px;background:#000;"></div>
<div class="abs" style="left:41px;top:670px;width:91px;height:1px;background:#000;"></div>
<div class="abs" style="left:136px;top:670px;width:732px;height:1px;background:#000;"></div>
<div class="abs" style="left:41px;top:691px;width:91px;height:1px;background:#000;"></div>
<div class="abs" style="left:136px;top:691px;width:732px;height:1px;background:#000;"></div>
<div class="abs" style="left:41px;top:712px;width:91px;height:1px;background:#000;"></div>
<div class="abs" style="left:136px;top:712px;width:732px;height:1px;background:#000;"></div>
<div class="abs" style="left:41px;top:733px;width:91px;height:1px;background:#000;"></div>
<div class="abs" style="left:136px;top:733px;width:732px;height:1px;background:#000;"></div>
<div class="abs" style="left:41px;top:754px;width:91px;height:1px;background:#000;"></div>
<div class="abs" style="left:136px;top:754px;width:732px;height:1px;background:#000;"></div>
<div class="abs" style="left:41px;top:775px;width:91px;height:1px;background:#000;"></div>
<div class="abs" style="left:136px;top:775px;width:732px;height:1px;background:#000;"></div>
<div class="abs" style="left:41px;top:204px;width:91px;height:1px;background:#000;"></div>
<div class="abs" style="left:136px;top:204px;width:732px;height:1px;background:#000;"></div>
<div class="abs" style="left:40px;top:183px;width:828px;height:1px;background:#1e8e3e;"></div>
<div class="abs" style="left:409px;top:183px;width:91px;height:1px;background:#186a31;"></div>
<div class="abs" style="left:40px;top:184px;width:1px;height:608px;background:#1e8e3e;"></div>
<div class="abs" style="left:131px;top:184px;width:1px;height:608px;background:#000;"></div>
<div class="abs" style="left:226px;top:184px;width:1px;height:608px;background:#000;"></div>
<div class="abs" style="left:317px;top:184px;width:1px;height:608px;background:#000;"></div>
<div class="abs" style="left:590px;top:184px;width:1px;height:608px;background:#000;"></div>
<div class="abs" style="left:681px;top:184px;width:1px;height:608px;background:#000;"></div>
<div class="abs" style="left:772px;top:184px;width:1px;height:608px;background:#000;"></div>
<div class="abs" style="left:863px;top:184px;width:1px;height:608px;background:#000;"></div>
<div class="abs" style="left:408px;top:184px;width:1px;height:608px;background:#2a6be0;"></div>
<div class="abs" style="left:499px;top:184px;width:1px;height:608px;background:#2a6be0;"></div>
<div class="abs" style="left:409px;top:203px;width:90px;height:1px;background:#2a6be0;"></div>
<div class="abs" style="left:498px;top:184px;width:1px;height:20px;background:#2a6be0;"></div>
<div class="abs" style="left:0px;top:205px;width:868px;height:4px;background:#c6c6c6;"></div>
<div class="abs" style="left:0px;top:204px;width:40px;height:1px;background:#c6c6c6;"></div>
<div class="abs" style="left:132px;top:162px;width:4px;height:630px;background:#c6c6c6;"></div>
<div class="abs" style="left:868px;top:162px;width:7px;height:630px;background:#fafbfc;"></div>
<div class="abs" style="left:868px;top:162px;width:7px;height:22px;background:#f8f9fa;"></div>
<div class="abs" style="left:868px;top:184px;width:1px;height:608px;background:#e3e5e8;"></div>
<div class="abs" style="left:868px;top:205px;width:7px;height:4px;background:#e3eaf6;"></div>
<div class="abs" style="left:868.5px;top:210px;width:12px;height:22.5px;background:#dadce0;border-radius:5px;"></div>
<div class="abs" style="left:868px;top:764px;width:7px;height:28px;background:#f8f9fa;border-top:1px solid #e1e3e1;"></div>
<div class="abs" style="left:868px;top:778px;width:7px;height:1px;background:#e1e3e1;"></div>
<div class="abs" style="left:871.30px;top:769.60px;width:0;height:0;border-left:4.20px solid transparent;border-right:4.20px solid transparent;border-bottom:2.80px solid #a0a3a7"></div>
<div class="abs" style="left:871.30px;top:784.20px;width:0;height:0;border-left:4.20px solid transparent;border-right:4.20px solid transparent;border-top:3.00px solid #a0a3a7"></div>
<div class="abs" style="left:0px;top:792px;width:875px;height:11px;background:#fff;"></div>
<div class="abs" style="left:131px;top:793px;width:5px;height:9px;background:#e8eaed;"></div>
<div class="abs" style="left:138px;top:792.5px;width:224px;height:8.8px;background:#dadce0;border-radius:4.400px;"></div>
<div class="abs" style="left:842px;top:792px;width:27px;height:10px;background:#f8f9fa;border-left:1px solid #e1e3e1;border-right:1px solid #e1e3e1;"></div>
<div class="abs" style="left:856px;top:792px;width:1px;height:10px;background:#e1e3e1;"></div>
<div class="abs" style="left:870px;top:792px;width:1px;height:11px;background:#e6e8ea;"></div>
<div class="abs" style="left:846.90px;top:796.00px;width:0;height:0;border-top:2.30px solid transparent;border-bottom:2.30px solid transparent;border-right:4.10px solid #b4b7bb"></div>
<div class="abs" style="left:861.30px;top:796.00px;width:0;height:0;border-top:2.30px solid transparent;border-bottom:2.30px solid transparent;border-left:4.30px solid #b4b7bb"></div>
<div class="abs" style="left:0px;top:803px;width:875px;height:1px;background:#e1e3e6;"></div>
<div class="abs" style="left:0px;top:804px;width:875px;height:32px;background:#f9fbfd;"></div>
<svg class="abs" style="left:49px;top:816px" width="13.200" height="10" viewBox="0 0 13.200 10"><path d="M0 1.100h13.200M0 4.800h13.200M0 8.500h13.200" stroke="#444746" stroke-width="1.500"/></svg>
<div class="abs" style="left:84px;top:804px;width:136px;height:32px;background:#e1e9f7;"></div>
<span style='position:absolute;left:96.00px;top:814px;font-size:12px;line-height:14px;letter-spacing:0.533px;color:#0b57d0;white-space:nowrap;font-family:"Liberation Sans",sans-serif;font-weight:bold;'>Đầu đuôi VKCB</span>
<div class="abs" style="left:201.60px;top:818.80px;width:0;height:0;border-left:4.10px solid transparent;border-right:4.10px solid transparent;border-top:4.00px solid #0b57d0"></div>
<span style='position:absolute;left:231.30px;top:814px;font-size:12px;line-height:14px;letter-spacing:0.688px;color:#444746;white-space:nowrap;font-family:"Liberation Sans",sans-serif;'>Đầu đuôi VKCC</span>
<div class="abs" style="left:335.20px;top:818.80px;width:0;height:0;border-left:4.00px solid transparent;border-right:4.00px solid transparent;border-top:3.90px solid #444746"></div>
<span style='position:absolute;left:365.60px;top:814px;font-size:12px;line-height:14px;letter-spacing:0.935px;color:#444746;white-space:nowrap;font-family:"Liberation Sans",sans-serif;'>Đầu đuôi giáp</span>
<div class="abs" style="left:461.50px;top:818.80px;width:0;height:0;border-left:4.00px solid transparent;border-right:4.00px solid transparent;border-top:3.90px solid #444746"></div>
<div class="abs" style="left:761px;top:806px;width:108px;height:27px;background:#c4eed0;border-radius:5.500px;"></div>
<span style='position:absolute;left:770.80px;top:813px;font-size:12.5px;line-height:14px;letter-spacing:0.334px;color:#0d5225;white-space:nowrap;font-family:"Liberation Sans",sans-serif;'>Tổng: 904%</span>
<div class="abs" style="left:848.90px;top:818.20px;width:0;height:0;border-left:4.20px solid transparent;border-right:4.20px solid transparent;border-top:4.40px solid #0d3b1c"></div>
</div></body></html>
